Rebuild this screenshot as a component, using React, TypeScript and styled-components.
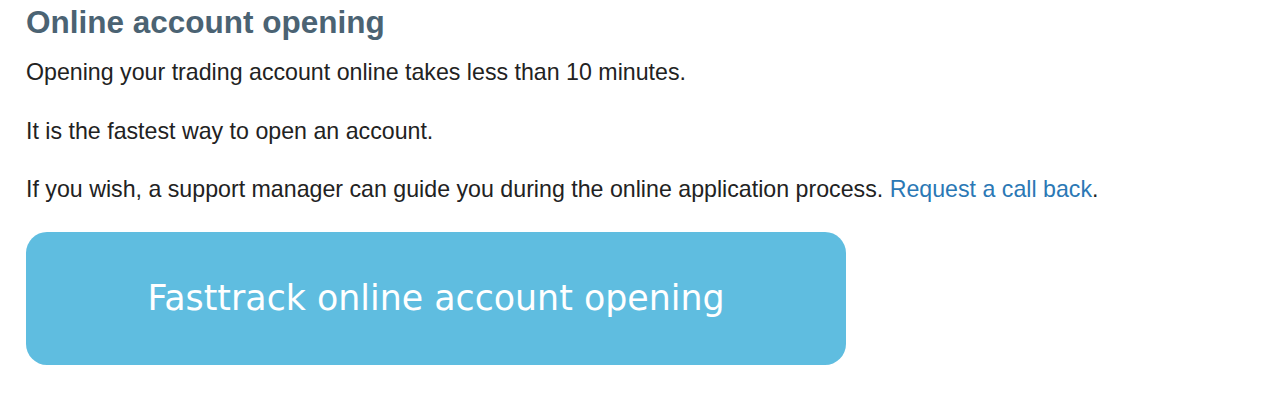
import React from "react";
import styled, { createGlobalStyle } from "styled-components";

const GlobalStyle = createGlobalStyle`
  html, body {
    margin: 0;
    padding: 0;
    background: #ffffff;
  }
  body {
    font-family: "Liberation Sans", Arial, Helvetica, sans-serif;
    color: #222222;
  }
`;

const Section = styled.section`
  padding: 0 26px;
  display: flex;
  flex-direction: column;
  align-items: flex-start;
`;

const Title = styled.h2`
  margin: 2px 0 0;
  font-size: 31.5px;
  line-height: 40px;
  font-weight: bold;
  color: #4b6373;
`;

const Paragraph = styled.p`
  margin: 15px 0 0;
  font-size: 23.2px;
  line-height: 30px;
  & + & {
    margin-top: 28.5px;
  }
`;

const Link = styled.a`
  color: #2b78b5;
  text-decoration: none;
`;

const FasttrackButton = styled.a`
  margin-top: 27.5px;
  width: 820px;
  height: 133px;
  display: flex;
  align-items: center;
  justify-content: center;
  border-radius: 21px;
  background: #5fbde0;
  color: #ffffff;
  font-family: "DejaVu Sans", Verdana, sans-serif;
  font-size: 34.8px;
  text-decoration: none;
  cursor: pointer;
`;

export default function App() {
  return (
    <>
      <GlobalStyle />
      <Section>
        <Title>Online account opening</Title>
        <Paragraph>Opening your trading account online takes less than 10 minutes.</Paragraph>
        <Paragraph>It is the fastest way to open an account.</Paragraph>
        <Paragraph>
          If you wish, a support manager can guide you during the online application process.{" "}
          <Link href="#">Request a call back</Link>.
        </Paragraph>
        <FasttrackButton href="#">Fasttrack online account opening</FasttrackButton>
      </Section>
    </>
  );
}
